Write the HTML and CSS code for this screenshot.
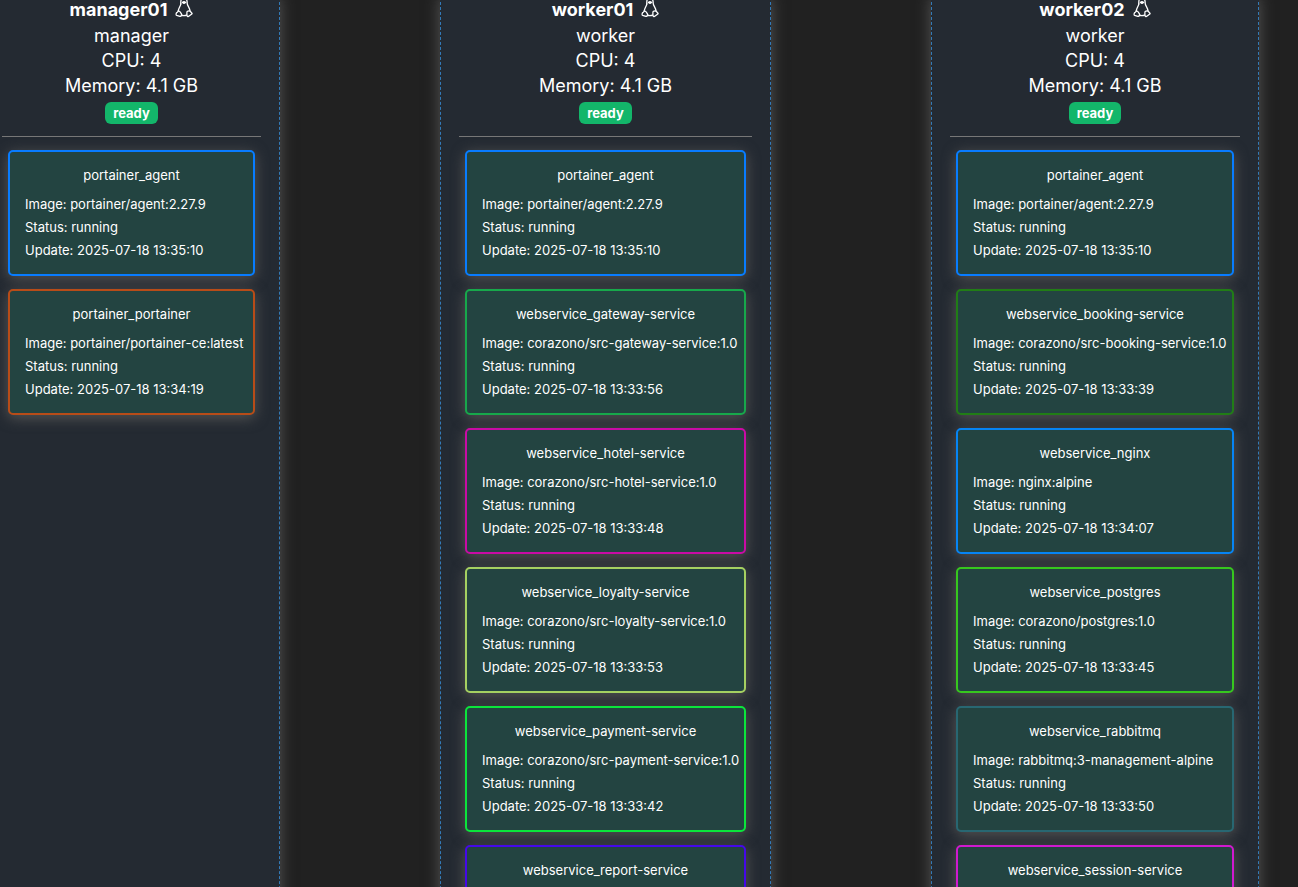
FILE: index.html
```
<!DOCTYPE html>
<html lang="en">
<head>
<meta charset="utf-8">
<title>Swarm visualizer</title>
<link rel="stylesheet" href="styles.css">
</head>
<body>
<svg class="sprite" aria-hidden="true">
  <symbol id="tux" viewBox="0 0 18 21">
    <g fill="none" stroke="currentColor" stroke-width="1.3" stroke-linejoin="round" stroke-linecap="round">
      <path d="M5.8 7C5.6 2.8 6.4.8 8.8.8s3.4 2 3.4 5.4c0 2.6 2.6 4.4 2.8 7.8"/>
      <path d="M5.8 7C5.4 9.4 3.6 11 3.2 14"/>
      <path d="M6.2 18.2c1.6.6 3.8.6 5.4 0"/>
      <path d="M3.4 13.8c1.4-.2 2.3 1.8 3 3 .8 1.5-.1 2.7-1.5 2.5l-3.3-.9c-.9-.3-.5-1-.4-1.8.1-.9.2-1.1 1-1.2.8-.1.5-1.3 1.2-1.6Z"/>
      <path d="M12.2 14.4c.9-.7 2.8-.8 3.3.1.3.7.4 1 1.1 1.4.8.5.6.9-.1 1.4l-2.4 1.8c-1.1.8-2.3.2-2.2-1.1.1-1.2-.3-2.9.3-3.6Z"/>
      <path d="m7.4 5.4 1.6-.7 1.6.7L9 6.4Z"/>
    </g>
  </symbol>
</svg>
<main class="board">
  <section class="node">
    <header class="node-head">
      <h2 class="node-name">manager01 <svg class="os" role="img" aria-label="linux"><use href="#tux"/></svg></h2>
      <p>manager</p><p>CPU: 4</p><p>Memory: 4.1 GB</p>
      <span class="badge">ready</span>
    </header>
    <hr class="rule">
    <article class="task blue"><h3>portainer_agent</h3><p>Image: portainer/agent:2.27.9</p><p>Status: running</p><p>Update: 2025-07-18 13:35:10</p></article>
    <article class="task rust"><h3>portainer_portainer</h3><p>Image: portainer/portainer-ce:latest</p><p>Status: running</p><p>Update: 2025-07-18 13:34:19</p></article>
  </section>
  <section class="node">
    <header class="node-head">
      <h2 class="node-name">worker01 <svg class="os" role="img" aria-label="linux"><use href="#tux"/></svg></h2>
      <p>worker</p><p>CPU: 4</p><p>Memory: 4.1 GB</p>
      <span class="badge">ready</span>
    </header>
    <hr class="rule">
    <article class="task blue"><h3>portainer_agent</h3><p>Image: portainer/agent:2.27.9</p><p>Status: running</p><p>Update: 2025-07-18 13:35:10</p></article>
    <article class="task green"><h3>webservice_gateway-service</h3><p>Image: corazono/src-gateway-service:1.0</p><p>Status: running</p><p>Update: 2025-07-18 13:33:56</p></article>
    <article class="task magenta"><h3>webservice_hotel-service</h3><p>Image: corazono/src-hotel-service:1.0</p><p>Status: running</p><p>Update: 2025-07-18 13:33:48</p></article>
    <article class="task lime"><h3>webservice_loyalty-service</h3><p>Image: corazono/src-loyalty-service:1.0</p><p>Status: running</p><p>Update: 2025-07-18 13:33:53</p></article>
    <article class="task neon"><h3>webservice_payment-service</h3><p>Image: corazono/src-payment-service:1.0</p><p>Status: running</p><p>Update: 2025-07-18 13:33:42</p></article>
    <article class="task indigo"><h3>webservice_report-service</h3></article>
  </section>
  <section class="node">
    <header class="node-head">
      <h2 class="node-name">worker02 <svg class="os" role="img" aria-label="linux"><use href="#tux"/></svg></h2>
      <p>worker</p><p>CPU: 4</p><p>Memory: 4.1 GB</p>
      <span class="badge">ready</span>
    </header>
    <hr class="rule">
    <article class="task blue"><h3>portainer_agent</h3><p>Image: portainer/agent:2.27.9</p><p>Status: running</p><p>Update: 2025-07-18 13:35:10</p></article>
    <article class="task forest"><h3>webservice_booking-service</h3><p>Image: corazono/src-booking-service:1.0</p><p>Status: running</p><p>Update: 2025-07-18 13:33:39</p></article>
    <article class="task azure"><h3>webservice_nginx</h3><p>Image: nginx:alpine</p><p>Status: running</p><p>Update: 2025-07-18 13:34:07</p></article>
    <article class="task leaf"><h3>webservice_postgres</h3><p>Image: corazono/postgres:1.0</p><p>Status: running</p><p>Update: 2025-07-18 13:33:45</p></article>
    <article class="task teal"><h3>webservice_rabbitmq</h3><p>Image: rabbitmq:3-management-alpine</p><p>Status: running</p><p>Update: 2025-07-18 13:33:50</p></article>
    <article class="task pink"><h3>webservice_session-service</h3></article>
  </section>
</main>
</body>
</html>
```
FILE: styles.css
```
* { box-sizing: border-box; }
body {
  margin: 0;
  height: 100vh;
  overflow: hidden;
  background: #212121;
  color: #fff;
  font-family: Inter, "Liberation Sans", sans-serif;
}
h2, h3, p { margin: 0; }
.sprite { display: none; }
.board {
  display: grid;
  grid-template-columns: 297fr 331fr 328fr;
  column-gap: 160px;
  height: calc(100vh + 3px);
  overflow: hidden;
  margin: -3px 0 0 -17px;
  padding-right: 39px;
}
.node {
  min-width: 0;
  padding: 0 18px;
  background: #242a32;
  border: 1px dashed #337ab7;
  border-width: 0 1px;
  box-shadow: 0 0 14px #555;
}
.node-head {
  display: flex;
  flex-direction: column;
  align-items: center;
  font-size: 18px;
  line-height: 25px;
}
.node-name {
  display: flex;
  gap: 8px;
  margin-bottom: 1px;
  font-size: 18px;
  font-weight: 700;
}
.os { width: 18px; height: 21px; }
.badge {
  margin-top: 4px;
  padding: 0 8px;
  border-radius: 6px;
  background: #13b66a;
  font-size: 13px;
  font-weight: 700;
  line-height: 22px;
}
.rule {
  height: 1px;
  margin: 12px 0 13px;
  border: 0;
  background: #777;
}
.task {
  min-height: 126px;
  margin: 0 6px 13px;
  padding: 12px 15px;
  border: 2px solid;
  border-radius: 5px;
  background: #234441;
  box-shadow: 0 3px 14px #555;
  font-size: 13px;
  line-height: 23px;
  white-space: nowrap;
}
.task h3 {
  margin-bottom: 6px;
  font-size: 13px;
  font-weight: 400;
  text-align: center;
}
.blue { border-color: #087cff; }
.rust { border-color: #b84c18; }
.green { border-color: #17a84b; }
.magenta { border-color: #c90ba5; }
.lime { border-color: #a5d061; }
.neon { border-color: #0be53b; }
.indigo { border-color: #4508e8; }
.forest { border-color: #217d16; }
.azure { border-color: #0684f5; }
.leaf { border-color: #37c71e; }
.teal { border-color: #286772; }
.pink { border-color: #d019cf; }
```
